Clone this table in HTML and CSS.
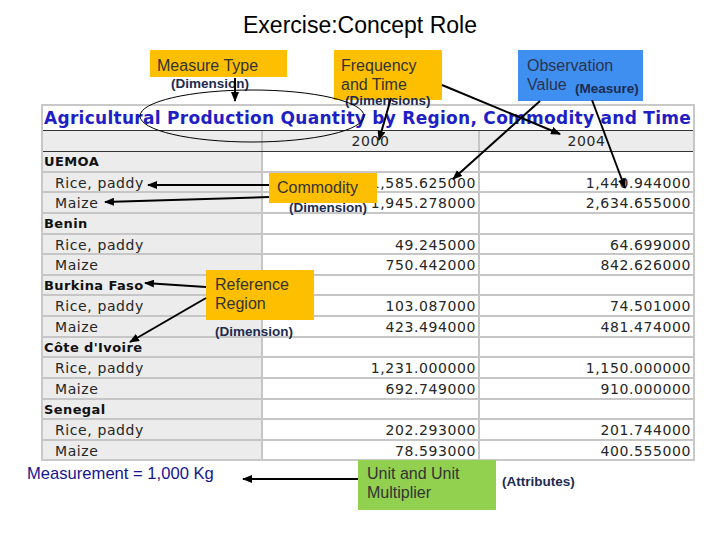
FILE: index.html
```html
<!DOCTYPE html>
<html>
<head>
<meta charset="utf-8">
<title>Exercise: Concept Role</title>
<link rel="stylesheet" href="styles.css">
</head>
<body>
<div class="page">
  <h1 class="title">Exercise:Concept Role</h1>

  <div class="data-table">
    <div class="table-title">Agricultural Production Quantity by Region, Commodity and Time</div>
    <div class="grid head">
      <div class="cell"></div>
      <div class="cell year">2000</div>
      <div class="cell year">2004</div>
    </div>
    <div class="grid body">
      <div class="cell region">UEMOA</div><div class="cell value"></div><div class="cell value"></div>
      <div class="cell label">Rice, paddy</div><div class="cell value">1,585.625000</div><div class="cell value">1,440.944000</div>
      <div class="cell label">Maize</div><div class="cell value">1,945.278000</div><div class="cell value">2,634.655000</div>
      <div class="cell region">Benin</div><div class="cell value"></div><div class="cell value"></div>
      <div class="cell label">Rice, paddy</div><div class="cell value">49.245000</div><div class="cell value">64.699000</div>
      <div class="cell label">Maize</div><div class="cell value">750.442000</div><div class="cell value">842.626000</div>
      <div class="cell region">Burkina Faso</div><div class="cell value"></div><div class="cell value"></div>
      <div class="cell label">Rice, paddy</div><div class="cell value">103.087000</div><div class="cell value">74.501000</div>
      <div class="cell label">Maize</div><div class="cell value">423.494000</div><div class="cell value">481.474000</div>
      <div class="cell region">Côte d'Ivoire</div><div class="cell value"></div><div class="cell value"></div>
      <div class="cell label">Rice, paddy</div><div class="cell value">1,231.000000</div><div class="cell value">1,150.000000</div>
      <div class="cell label">Maize</div><div class="cell value">692.749000</div><div class="cell value">910.000000</div>
      <div class="cell region">Senegal</div><div class="cell value"></div><div class="cell value"></div>
      <div class="cell label">Rice, paddy</div><div class="cell value">202.293000</div><div class="cell value">201.744000</div>
      <div class="cell label">Maize</div><div class="cell value">78.593000</div><div class="cell value">400.555000</div>
    </div>
  </div>

  <div class="footer">
    <div class="measurement">Measurement = 1,000 Kg</div>
    <div class="box green">Unit and Unit<br>Multiplier</div>
    <div class="role attr">(Attributes)</div>
  </div>

  <div class="callout orange c-measure">Measure Type</div>
  <div class="role tag t-measure">(Dimension)</div>

  <div class="callout orange c-freq">Frequency<br>and Time</div>
  <div class="role tag t-freq">(Dimensions)</div>

  <div class="callout blue c-obs">Observation<br>Value</div>
  <div class="role tag t-obs">(Measure)</div>

  <div class="callout orange c-comm">Commodity</div>
  <div class="role tag t-comm">(Dimension)</div>

  <div class="callout orange c-ref">Reference<br>Region</div>
  <div class="role tag t-ref">(Dimension)</div>

  <svg class="arrows" width="720" height="540" viewBox="0 0 720 540">
    <defs>
      <marker id="ah" markerWidth="10" markerHeight="8" refX="9" refY="4" orient="auto" markerUnits="userSpaceOnUse">
        <path d="M0,0 L10,4 L0,8 Z" fill="#000"/>
      </marker>
    </defs>
    <ellipse cx="252" cy="116" rx="112" ry="26" fill="none" stroke="#000" stroke-width="1"/>
    <g stroke="#000" stroke-width="2" fill="none" marker-end="url(#ah)">
      <line x1="235" y1="78" x2="235" y2="101"/>
      <line x1="391" y1="98" x2="379" y2="140"/>
      <line x1="442" y1="85" x2="560" y2="134"/>
      <line x1="540" y1="101" x2="453" y2="179"/>
      <line x1="592" y1="100" x2="625" y2="188"/>
      <line x1="269" y1="185" x2="148" y2="185"/>
      <line x1="269" y1="197" x2="105" y2="202"/>
      <line x1="206" y1="287" x2="145" y2="283"/>
      <line x1="206" y1="298" x2="130" y2="342"/>
      <line x1="358" y1="479" x2="243" y2="479"/>
    </g>
  </svg>
</div>
</body>
</html>
```

FILE: styles.css
```css
body {
  margin: 0;
  background: #fff;
}

.page {
  position: relative;
  width: 720px;
  height: 540px;
  overflow: hidden;
  font-family: "DejaVu Sans", Verdana, sans-serif;
}

.title {
  margin: 0;
  padding-top: 11px;
  font: 400 23px/28px "Liberation Sans", Arial, sans-serif;
  text-align: center;
  color: #000;
}

.data-table {
  margin: 65px 0 0 41px;
  width: 654px;
  box-sizing: border-box;
  border: 2px solid #c8c8c8;
  background: #fff;
}

.table-title {
  height: 24px;
  line-height: 24px;
  padding-left: 1px;
  font-family: "DejaVu Sans", Verdana, sans-serif;
  font-weight: bold;
  font-size: 17px;
  letter-spacing: 0.28px;
  color: #1f1fc4;
  border-bottom: 1px solid #333;
  white-space: nowrap;
  overflow: hidden;
}

.grid {
  display: grid;
  grid-template-columns: 218px 215px 213px;
  gap: 2px;
  background: #c6c6c6;
}

.head {
  border-bottom: 1px solid #333;
}

.head .cell {
  height: 20px;
  line-height: 21px;
  background: #ececec;
}

.body {
  grid-auto-rows: 18.64px;
}

.body .cell {
  box-sizing: border-box;
  padding-top: 1px;
  line-height: 18.64px;
}

.cell {
  font-size: 14px;
  letter-spacing: 0.6px;
  color: #262626;
  white-space: nowrap;
  overflow: hidden;
  background: #fff;
}

.cell.label {
  background: #ececec;
  padding-left: 12px;
}

.cell.region {
  background: #ececec;
  font-weight: bold;
  font-size: 13px;
  letter-spacing: 0.4px;
  padding-left: 1px;
  color: #111;
}

.cell.value {
  text-align: right;
  padding-right: 2px;
}

.cell.year {
  text-align: center;
}

.footer {
  display: flex;
  align-items: flex-start;
  margin-top: -1px;
  padding-left: 27px;
}

.measurement {
  flex: 0 0 331px;
  padding-top: 4px;
  font: 16.6px/19px "Liberation Sans", Arial, sans-serif;
  color: #16168f;
  white-space: nowrap;
}

.box {
  box-sizing: border-box;
  font: 16px/19px "Liberation Sans", Arial, sans-serif;
  color: #333;
}

.green {
  width: 138px;
  height: 50px;
  padding: 4px 0 0 9px;
  background: #92d050;
}

.role {
  font: bold 13.5px/16px "Liberation Sans", Arial, sans-serif;
  color: #1c2b4f;
  white-space: nowrap;
}

.attr {
  margin-left: 6px;
  padding-top: 14px;
}

.callout {
  position: absolute;
  box-sizing: border-box;
  font: 16px/19px "Liberation Sans", Arial, sans-serif;
  color: #333;
  white-space: nowrap;
}

.orange {
  background: #fdbf00;
}

.blue {
  background: #3f8ff0;
  color: #2b3350;
}

.tag {
  position: absolute;
}

.c-measure { left: 150px; top: 50px; width: 137px; height: 27px; padding: 5.5px 0 0 7px; }
.t-measure { left: 171px; top: 76px; }

.c-freq { left: 334px; top: 50px; width: 108px; height: 50px; padding: 5.5px 0 0 7px; }
.t-freq { left: 345px; top: 93px; }

.c-obs { left: 518px; top: 50px; width: 125px; height: 51px; padding: 5.5px 0 0 9px; }
.t-obs { left: 575px; top: 81px; }

.c-comm { left: 269px; top: 173px; width: 108px; height: 30px; padding: 5px 0 0 8px; }
.t-comm { left: 289px; top: 200px; }

.c-ref { left: 206px; top: 270px; width: 108px; height: 50px; padding: 4.5px 0 0 9px; }
.t-ref { left: 215px; top: 324px; }

.arrows {
  position: absolute;
  left: 0;
  top: 0;
  pointer-events: none;
}
```
